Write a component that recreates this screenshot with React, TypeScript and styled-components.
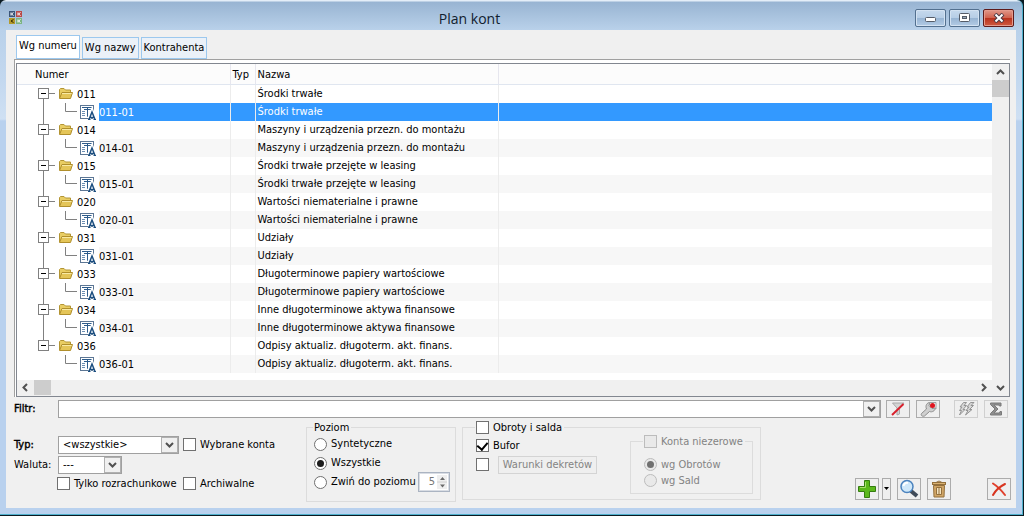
import React from "react";
import styled, { createGlobalStyle, css } from "styled-components";

const Global = createGlobalStyle`
  * { box-sizing: border-box; }
  body {
    margin: 0;
    background: #0a1a22;
    font: 11px/14px "DejaVu Sans Condensed", "Liberation Sans", sans-serif;
    color: #000;
  }
  button, input, select { font: inherit; color: inherit; margin: 0; padding: 0; border-radius: 0; }
`;

const Desktop = styled.div`
  min-height: 100vh;
  padding: 0 1px 1px 0;
  display: flex;
`;

const Frame = styled.main`
  flex: 1;
  min-width: 0;
  display: flex;
  flex-direction: column;
  padding: 0 6px 6px;
  border: solid #4fb0cc;
  border-width: 0 1px 1px 0;
  border-radius: 6px 6px 0 0;
  background: linear-gradient(#e4eef8 0 1px, #98b4d2 2px, #b9d1ea 30px, #c3d8ef 80px, #cfe0f3 119px, #b9d1ee 121px);
`;

const TitleBar = styled.header`
  height: 30px;
  padding: 0 2px 0 3px;
  display: grid;
  grid-template-columns: 1fr auto 1fr;
  align-items: center;
`;

const Title = styled.h1`
  margin: 7px 0 0;
  padding-right: 84px;
  font: 14px/20px "Open Sans", "Noto Sans", sans-serif;
  color: #10202e;
  grid-column: 2;
`;

const CaptionButtons = styled.div`
  display: flex;
  justify-content: flex-end;
  gap: 3px;
  padding-top: 6px;
`;

const CaptionButton = styled.button<{ $close?: boolean }>`
  width: 31px;
  height: 18px;
  display: grid;
  place-items: center;
  border: 1px solid ${(p) => (p.$close ? "#5e1a1a" : "#53708f")};
  border-radius: 2px;
  box-shadow: inset 0 0 0 1px ${(p) => (p.$close ? "#e59a8c" : "#d3e2f2")};
  background: ${(p) =>
    p.$close
      ? "linear-gradient(#e0988a, #d0604c 50%, #b8301c 50%, #cf5a40)"
      : "linear-gradient(#c6d9ed, #b6cde6 50%, #97b4d3 50%, #b3cbe5)"};
`;

const Client = styled.div`
  flex: 1;
  padding: 5px 5px 5px 8px;
  background: #f0f0f0;
`;

const Tabs = styled.nav`
  display: flex;
  align-items: flex-end;
  gap: 2px;
  padding-left: 2px;
`;

const Tab = styled.button<{ $active?: boolean }>`
  height: ${(p) => (p.$active ? 24 : 22)}px;
  padding: 0 2px ${(p) => (p.$active ? 3 : 0)}px;
  border: 1px solid #9cc8ee;
  background: ${(p) => (p.$active ? "#fff" : "#ebf1f8")};
`;

const Page = styled.section`
  margin-right: 1px;
  border: solid #a0a0a0;
  border-width: 1px 0 0 1px;
  background: #fff;
  padding: 3px 0 0 1px;
`;

const Viewport = styled.div`
  display: grid;
  grid-template-columns: minmax(0, 1fr) 17px;
  border: 1px solid #828790;
  background: #fff;
`;

const Accounts = styled.table`
  width: 100%;
  table-layout: fixed;
  border-collapse: collapse;
  margin-bottom: 7px;
`;

const HeadCell = styled.th<{ $indent?: number }>`
  height: 20px;
  padding: 2px 0 0 ${(p) => p.$indent ?? 2}px;
  border-right: 1px solid #e6e6ee;
  border-bottom: 1px solid #e0e6f0;
  background: #fcfcfc;
  font-weight: normal;
  text-align: left;
  &:last-child { border-right: 0; }
`;

const Row = styled.tr<{ $shaded?: boolean }>`
  height: 18px;
  background: ${(p) => (p.$shaded ? "#f7f7f7" : "#fff")};
`;

const Cell = styled.td<{ $selected?: boolean }>`
  padding: 1px 0 0 2px;
  border-right: 1px solid #ececec;
  white-space: nowrap;
  &:last-child { border-right: 0; }
  ${(p) => p.$selected && css`background: #3399ff; color: #fff;`}
`;

const TreeCell = styled(Cell)`
  padding: 0;
  background: #fff;
  color: #000;
`;

const TreeLine = styled.div<{ $leaf: boolean }>`
  display: grid;
  grid-template-columns: ${(p) => (p.$leaf ? "82px" : "60px")} 1fr;
  align-items: center;
`;

const Code = styled.span<{ $selected?: boolean; $shaded?: boolean }>`
  height: 18px;
  padding-top: 1px;
  line-height: 17px;
  ${(p) => p.$shaded && css`background: #f7f7f7;`}
  ${(p) => p.$selected && css`background: #3399ff; color: #fff;`}
`;

const ScrollTrack = styled.div<{ $vertical?: boolean }>`
  display: flex;
  flex-direction: ${(p) => (p.$vertical ? "column" : "row")};
  background: #f0f0f0;
  ${(p) => p.$vertical && css`grid-row: span 2;`}
`;

const ScrollButton = styled.button`
  width: 17px;
  height: 16px;
  display: grid;
  place-items: center;
  border: 0;
  background: transparent;
`;

const ScrollThumb = styled.div`
  width: 17px;
  height: 17px;
  background: #cdcdcd;
`;

const HorizontalThumb = styled(ScrollThumb)`
  height: 15px;
`;

const Spacer = styled.div`
  flex: 1;
`;

const FilterRow = styled.div`
  display: flex;
  align-items: center;
  margin-top: 3px;
  padding-right: 3px;
`;

const Caption = styled.label<{ $strong?: boolean }>`
  width: 44px;
  flex: none;
  white-space: nowrap;
  -webkit-text-stroke: ${(p) => (p.$strong ? "0.4px #000" : "0")};
`;

const Combo = styled.div<{ $width?: number }>`
  ${(p) => (p.$width ? css`width: ${p.$width}px;` : css`flex: 1;`)}
  height: 18px;
  display: grid;
  grid-template-columns: 1fr 17px;
  border: 1px solid #a0a0a0;
  background: #fff;
  & > * { grid-row: 1; }
`;

const ComboInput = styled.input`
  grid-column: 1;
  min-width: 0;
  border: 0;
  padding: 0 4px;
  outline: 0;
`;

const ComboSelect = styled.select`
  grid-column: 1 / 3;
  min-width: 0;
  appearance: none;
  border: 0;
  padding: 0 4px;
  background: transparent;
  outline: 0;
`;

const ComboArrow = styled.span`
  grid-column: 2;
  display: grid;
  place-items: center;
  border: 1px solid #b0b0b0;
  background: #f0f0f0;
  pointer-events: none;
`;

const ToolButton = styled.button<{ $tall?: boolean; $narrow?: boolean; $dim?: boolean }>`
  width: ${(p) => (p.$narrow ? 9 : 24)}px;
  height: ${(p) => (p.$tall ? 22 : 18)}px;
  flex: none;
  display: grid;
  place-items: center;
  border: 1px solid ${(p) => (p.$dim ? "#d0d0d0" : "#acacac")};
  background: #efefef;
`;

const ToolGroup = styled.div<{ $gap: number }>`
  display: flex;
  gap: ${(p) => p.$gap}px;
`;

const FilterTools = styled.div`
  display: flex;
  gap: 14px;
  margin-left: 5px;
`;

const Options = styled.form`
  display: flex;
  align-items: flex-start;
  margin-top: 3px;
`;

const Selectors = styled.div`
  width: 292px;
  padding-top: 14px;
`;

const Line = styled.div<{ $indent?: number; $short?: boolean }>`
  display: flex;
  align-items: center;
  height: ${(p) => (p.$short ? 18 : 20)}px;
  padding-left: ${(p) => p.$indent ?? 0}px;
`;

const Check = styled.label<{ $width?: number; $disabled?: boolean }>`
  display: flex;
  align-items: center;
  gap: 4px;
  height: 14px;
  white-space: nowrap;
  ${(p) => p.$width && css`width: ${p.$width}px;`}
  ${(p) => p.$disabled && css`color: #838383;`}
`;

const CheckInput = styled.input<{ $round?: boolean }>`
  appearance: none;
  flex: none;
  width: 13px;
  height: 13px;
  display: grid;
  place-items: center;
  border: 1px solid #707070;
  background: #fff;
  ${(p) => p.$round && css`border-radius: 50%;`}
  &:disabled { border-color: #bcbcbc; background: #e9e9e9; }
  &[type="radio"]:checked::after {
    content: "";
    width: 7px;
    height: 7px;
    border-radius: 50%;
    background: #1c1c1c;
  }
  &[type="radio"]:checked:disabled::after { background: #707070; }
  &[type="checkbox"]:checked::after {
    content: "";
    width: 5px;
    height: 8px;
    margin-bottom: 2px;
    border: solid #000;
    border-width: 0 2px 2px 0;
    transform: rotate(40deg);
  }
`;

const Group = styled.fieldset<{ $width: number; $height: number; $end?: number }>`
  min-width: 0;
  width: ${(p) => p.$width}px;
  height: ${(p) => p.$height}px;
  margin: 0 ${(p) => p.$end ?? 6}px 0 0;
  padding: 0 5px 0 7px;
  border: 1px solid #dcdcdc;
`;

const Legend = styled.legend<{ $flush?: boolean }>`
  padding: 0 2px 0 1px;
  margin-left: ${(p) => (p.$flush ? 5 : -1)}px;
`;

const Stack = styled.div<{ $gap: number; $top?: number }>`
  display: flex;
  flex-direction: column;
  gap: ${(p) => p.$gap}px;
  padding-top: ${(p) => p.$top ?? 0}px;
`;

const Split = styled.div`
  display: flex;
  justify-content: space-between;
  padding-left: 6px;
`;

const Between = styled.div`
  display: flex;
  justify-content: space-between;
  align-items: center;
  height: 19px;
`;

const Inline = styled.div`
  display: flex;
  align-items: center;
  gap: 9px;
`;

const ConditionButton = styled.button`
  width: 99px;
  height: 18px;
  border: 1px solid #d4d4d4;
  background: #efefef;
  color: #838383;
`;

const Spin = styled.div`
  width: 32px;
  height: 20px;
  display: grid;
  grid-template-columns: 1fr 12px;
  border: 1px solid #abb4c2;
  box-shadow: inset 0 0 0 1px #d9dde4;
  background: #fff;
`;

const SpinInput = styled.input`
  min-width: 0;
  border: 0;
  padding: 0 2px;
  background: transparent;
  color: #777;
  text-align: right;
`;

const Actions = styled.div`
  flex: 1;
  display: flex;
  justify-content: flex-end;
  gap: 36px;
  padding-top: 57px;
`;

type ChevronDir = "up" | "down" | "left" | "right";
const chevrons: Record<ChevronDir, string> = {
  up: "M1 6 4.500 2.500 8 6",
  down: "M1 3 4.500 6.500 8 3",
  left: "M6 1 2.500 4.500 6 8",
  right: "M3 1 6.500 4.500 3 8",
};
const Chevron = ({ dir }: { dir: ChevronDir }) => (
  <svg width="9" height="9" viewBox="0 0 9 9" fill="none" stroke="#505050" strokeWidth="2">
    <path d={chevrons[dir]} />
  </svg>
);

const AppIcon = () => (
  <svg width="13" height="17" viewBox="0 0 13 17">
    <rect x="0" y="4" width="6" height="6" fill="#3b5578" />
    <rect x="7" y="4" width="6" height="6" fill="#b84a48" />
    <rect x="0" y="11" width="6" height="6" fill="#b39a2c" />
    <rect x="7" y="11" width="6" height="6" fill="#7cb483" />
    <path d="M2 5.500v3M4.500 5.500 2.500 7l2 1.500M9 5.500v3M11.500 5.500 9.500 7l2 1.500M9 12.500v3M11.500 12.500 9.500 14l2 1.500" stroke="#fff" fill="none" />
    <path d="M4.500 12.500 2 14l2.500 1.500" stroke="#332b08" fill="none" />
  </svg>
);

const Folder = () => (
  <g transform="translate(42 2)">
    <path d="M.5 11V2.500L1.500 1.500H5L6.500 3H11.500V5" fill="#e9cd63" stroke="#b39534" />
    <path d="M.5 11.500 3 5.500H13.500L11.500 11.500Z" fill="#e4c558" stroke="#b08f2c" />
    <path d="M3 6.500H12.500" stroke="#f8e9a4" />
  </g>
);

const Sheet = () => (
  <g transform="translate(63 1)">
    <rect x=".5" y="1.500" width="13" height="13" fill="#fff" stroke="#5c7694" />
    <path d="M2 3.500H12M7.500 4V13M4 5.500H11" stroke="#2d5c8c" fill="none" />
    <path d="M2 7.500H5M2 9.500H5M2 11.500H5" stroke="#6d8fb3" fill="none" />
    <path d="M9 14.500 12 7.500 15 14.500" stroke="#fff" strokeWidth="4" fill="none" />
    <path d="M9 15.500 12 8 15 15.500M10 13.500H14" stroke="#1d4f80" strokeWidth="1.500" fill="none" />
    <path d="M8 15.500H10.500M13.500 15.500H16" stroke="#1d4f80" fill="none" />
  </g>
);

const ParentTree = ({ first, last }: { first: boolean; last: boolean }) => (
  <svg width="59" height="18" viewBox="0 0 59 18" display="block">
    <path d={`M26.500 ${first ? 9 : 0}V${last ? 9 : 18}M27 8.500H38`} stroke="#808080" fill="none" />
    <rect x="21.500" y="3.500" width="10" height="10" fill="#fff" stroke="#808080" />
    <path d="M24 8.500H29" stroke="#000" />
    <Folder />
  </svg>
);

const ChildTree = ({ last }: { last: boolean }) => (
  <svg width="82" height="18" viewBox="0 0 82 18" display="block">
    {!last && <path d="M26.500 0V18" stroke="#808080" />}
    <path d="M48.500 0V8.500H60" stroke="#808080" fill="none" />
    <Sheet />
  </svg>
);

const accounts: [string, string][] = [
  ["011", "Środki trwałe"],
  ["014", "Maszyny i urządzenia przezn. do montażu"],
  ["015", "Środki trwałe przejęte w leasing"],
  ["020", "Wartości niematerialne i prawne"],
  ["031", "Udziały"],
  ["033", "Długoterminowe papiery wartościowe"],
  ["034", "Inne długoterminowe aktywa finansowe"],
  ["036", "Odpisy aktualiz. długoterm. akt. finans."],
];

const AccountRows = () => (
  <tbody>
    {accounts.map(([code, name], i) => {
      const last = i === accounts.length - 1;
      const selected = i === 0;
      return (
        <React.Fragment key={code}>
          <Row>
            <TreeCell>
              <TreeLine $leaf={false}>
                <ParentTree first={i === 0} last={last} />
                <Code>{code}</Code>
              </TreeLine>
            </TreeCell>
            <Cell />
            <Cell>{name}</Cell>
            <Cell />
          </Row>
          <Row $shaded>
            <TreeCell>
              <TreeLine $leaf>
                <ChildTree last={last} />
                <Code $shaded $selected={selected}>{code}-01</Code>
              </TreeLine>
            </TreeCell>
            <Cell $selected={selected} />
            <Cell $selected={selected}>{name}</Cell>
            <Cell $selected={selected} />
          </Row>
        </React.Fragment>
      );
    })}
  </tbody>
);

const FunnelOff = () => (
  <svg width="16" height="16" viewBox="0 0 16 16">
    <path d="M2.500 2H14L9.500 7V13L7 14V7Z" fill="#d4d4d4" stroke="#a8a8a8" />
    <path d="M2 14 13.500 3" stroke="#d8202c" strokeWidth="2" />
  </svg>
);

const Wrench = () => (
  <svg width="17" height="16" viewBox="0 0 17 16">
    <path d="M1.500 12.500 6.500 8C5 4.500 7 1.500 10 1.500L9 4.500 12 7.500 15.500 7C15 10 12 11.500 9.500 10.500L4.500 15C2 16 .5 14 1.500 12.500Z" fill="#cfcfcf" stroke="#8d8d8d" />
    <path d="M9 1.500H16V8" stroke="#a0a0a0" fill="none" />
    <circle cx="12.500" cy="4.500" r="2.500" fill="#e0141e" />
  </svg>
);

const Bolts = () => (
  <svg width="17" height="16" viewBox="0 0 17 16" fill="#d8d8d8" stroke="#949494">
    <path d="M5.500 1.500H8.500L6 4.500H8.500L5 8.500H7L1.500 14 3.500 9.500H1.500L4 6H2Z" />
    <path d="M12.500 1.500H16L13 4.500H15.500L11.500 8.500H14L7.500 14 10 9.500H8L11 6H9Z" />
  </svg>
);

const Sum = () => (
  <svg width="14" height="14" viewBox="0 0 14 14">
    <path d="M1.500 1H12V4H10.500L10 3H5L9 7 5 11H10.500L11 9.500H12.500V13H1.500V11.500L6 7 1.500 2.500Z" fill="#8e8e8e" stroke="#7a7a7a" />
  </svg>
);

const Plus = () => (
  <svg width="20" height="20" viewBox="0 0 20 20">
    <path d="M7.500 1.500H12.500V7.500H18.500V12.500H12.500V18.500H7.500V12.500H1.500V7.500H7.500Z" fill="#5cb81c" stroke="#357c10" />
    <path d="M8.500 3V8.500H3" stroke="#a9e070" fill="none" />
  </svg>
);

const Magnifier = () => (
  <svg width="20" height="20" viewBox="0 0 20 20">
    <path d="M12 12 18 17" stroke="#3f4a58" strokeWidth="4" />
    <circle cx="8" cy="7.500" r="6" fill="#cfe8fa" stroke="#4b83be" strokeWidth="1.500" />
    <path d="M4.500 7C5 4.500 7 3.500 9 4" stroke="#fff" strokeWidth="2" fill="none" />
  </svg>
);

const Trash = () => (
  <svg width="16" height="18" viewBox="0 0 16 18" stroke="#94703c">
    <path d="M5 2.500 8 1 11 2.500" fill="none" />
    <rect x="1.500" y="2.500" width="13" height="2" fill="#d9b070" />
    <path d="M2.500 5.500H13.500L13 17H3Z" fill="#d0a566" />
    <path d="M5.500 7.500H10.500V14.500H5.500Z" fill="#f4e3c0" />
    <path d="M8 7.500V14.500" />
  </svg>
);

const Cross = () => (
  <svg width="16" height="16" viewBox="0 0 16 16" fill="none" strokeLinecap="round" strokeWidth="2">
    <path d="M2 2.500C6 5 10.500 9.500 14 14" stroke="#e0402c" />
    <path d="M14 3C9 5.500 4.500 9.500 2 14" stroke="#d8341f" />
  </svg>
);

const SpinArrows = () => (
  <svg width="12" height="18" viewBox="0 0 12 18">
    <rect x="0" y="2" width="10" height="14" fill="#efefef" />
    <path d="M0 9H10" stroke="#d0d0d0" />
    <path d="M3 7H8L5.500 4ZM3 11.500H8L5.500 14.500Z" fill="#6a6a6a" />
  </svg>
);

export default function App() {
  return (
    <Desktop>
      <Global />
      <Frame>
        <TitleBar>
          <AppIcon />
          <Title>Plan kont</Title>
          <CaptionButtons>
            <CaptionButton type="button" aria-label="Minimalizuj">
              <svg width="13" height="10" viewBox="0 0 13 10">
                <rect x="1.500" y="4.500" width="10" height="4" rx="1" fill="#fff" stroke="#555c68" />
              </svg>
            </CaptionButton>
            <CaptionButton type="button" aria-label="Maksymalizuj">
              <svg width="13" height="10" viewBox="0 0 13 10">
                <rect x="1.500" y=".5" width="10" height="8" rx="1" fill="#fff" stroke="#555c68" />
                <rect x="4.500" y="3.500" width="4" height="2" fill="#9ab" stroke="#555c68" />
              </svg>
            </CaptionButton>
            <CaptionButton type="button" $close aria-label="Zamknij">
              <svg width="12" height="10" viewBox="0 0 12 10">
                <path d="M2 1 10 9M10 1 2 9" stroke="#4d3a44" strokeWidth="4" />
                <path d="M2.500 1.500 9.500 8.500M9.500 1.500 2.500 8.500" stroke="#fff" strokeWidth="2" />
              </svg>
            </CaptionButton>
          </CaptionButtons>
        </TitleBar>

        <Client>
          <Tabs>
            <Tab type="button" $active>Wg numeru</Tab>
            <Tab type="button">Wg nazwy</Tab>
            <Tab type="button">Kontrahenta</Tab>
          </Tabs>

          <Page>
            <Viewport>
              <Accounts>
                <colgroup>
                  <col style={{ width: 213 }} />
                  <col style={{ width: 25 }} />
                  <col style={{ width: 243 }} />
                  <col />
                </colgroup>
                <thead>
                  <tr>
                    <HeadCell $indent={18}>Numer</HeadCell>
                    <HeadCell>Typ</HeadCell>
                    <HeadCell>Nazwa</HeadCell>
                    <HeadCell />
                  </tr>
                </thead>
                <AccountRows />
              </Accounts>
              <ScrollTrack $vertical>
                <ScrollButton type="button" aria-label="W górę"><Chevron dir="up" /></ScrollButton>
                <ScrollThumb />
                <Spacer />
                <ScrollButton type="button" aria-label="W dół"><Chevron dir="down" /></ScrollButton>
              </ScrollTrack>
              <ScrollTrack>
                <ScrollButton type="button" aria-label="W lewo"><Chevron dir="left" /></ScrollButton>
                <HorizontalThumb />
                <Spacer />
                <ScrollButton type="button" aria-label="W prawo"><Chevron dir="right" /></ScrollButton>
              </ScrollTrack>
            </Viewport>
          </Page>

          <FilterRow>
            <Caption htmlFor="filter" $strong>Filtr:</Caption>
            <Combo>
              <ComboInput id="filter" type="text" />
              <ComboArrow><Chevron dir="down" /></ComboArrow>
            </Combo>
            <FilterTools>
              <ToolGroup $gap={6}>
                <ToolButton type="button" aria-label="Usuń filtr"><FunnelOff /></ToolButton>
                <ToolButton type="button" aria-label="Ustawienia filtra"><Wrench /></ToolButton>
              </ToolGroup>
              <ToolGroup $gap={6}>
                <ToolButton type="button" $dim disabled aria-label="Przelicz"><Bolts /></ToolButton>
                <ToolButton type="button" $dim disabled aria-label="Suma"><Sum /></ToolButton>
              </ToolGroup>
            </FilterTools>
          </FilterRow>

          <Options>
            <Selectors>
              <Line>
                <Caption htmlFor="kind" $strong>Typ:</Caption>
                <Combo $width={121}>
                  <ComboSelect id="kind"><option>&lt;wszystkie&gt;</option></ComboSelect>
                  <ComboArrow><Chevron dir="down" /></ComboArrow>
                </Combo>
                <Line $indent={4}>
                  <Check><CheckInput type="checkbox" />Wybrane konta</Check>
                </Line>
              </Line>
              <Line>
                <Caption htmlFor="currency">Waluta:</Caption>
                <Combo $width={64}>
                  <ComboSelect id="currency"><option>---</option></ComboSelect>
                  <ComboArrow><Chevron dir="down" /></ComboArrow>
                </Combo>
              </Line>
              <Line $indent={43} $short>
                <Check $width={126}><CheckInput type="checkbox" />Tylko rozrachunkowe</Check>
                <Check><CheckInput type="checkbox" />Archiwalne</Check>
              </Line>
            </Selectors>

            <Group $width={150} $height={81}>
              <Legend>Poziom</Legend>
              <Stack $gap={0}>
                <Between>
                  <Check><CheckInput $round type="radio" name="level" />Syntetyczne</Check>
                </Between>
                <Between>
                  <Check><CheckInput $round type="radio" name="level" defaultChecked />Wszystkie</Check>
                </Between>
                <Between>
                  <Check><CheckInput $round type="radio" name="level" />Zwiń do poziomu</Check>
                  <Spin>
                    <SpinInput type="text" defaultValue="5" disabled aria-label="Poziom zwinięcia" />
                    <SpinArrows />
                  </Spin>
                </Between>
              </Stack>
            </Group>

            <Group $width={299} $height={79}>
              <Legend $flush>
                <Check><CheckInput type="checkbox" />Obroty i salda</Check>
              </Legend>
              <Split>
                <Stack $gap={3} $top={4}>
                  <Check><CheckInput type="checkbox" defaultChecked />Bufor</Check>
                  <Inline>
                    <CheckInput type="checkbox" aria-label="Warunki dekretów" />
                    <ConditionButton type="button" disabled>Warunki dekretów</ConditionButton>
                  </Inline>
                </Stack>
                <Group $width={123} $height={59} $end={2}>
                  <Legend $flush>
                    <Check $disabled><CheckInput type="checkbox" disabled />Konta niezerowe</Check>
                  </Legend>
                  <Split>
                    <Stack $gap={2} $top={9}>
                      <Check $disabled><CheckInput $round type="radio" name="scope" disabled defaultChecked />wg Obrotów</Check>
                      <Check $disabled><CheckInput $round type="radio" name="scope" disabled />wg Sald</Check>
                    </Stack>
                  </Split>
                </Group>
              </Split>
            </Group>

            <Actions>
              <ToolGroup $gap={6}>
                <ToolGroup $gap={3}>
                  <ToolButton type="button" $tall aria-label="Dodaj"><Plus /></ToolButton>
                  <ToolButton type="button" $tall $narrow aria-label="Więcej">
                    <svg width="5" height="3" viewBox="0 0 5 3"><path d="M0 0H5L2.500 3Z" /></svg>
                  </ToolButton>
                </ToolGroup>
                <ToolButton type="button" $tall aria-label="Podgląd"><Magnifier /></ToolButton>
                <ToolButton type="button" $tall aria-label="Usuń"><Trash /></ToolButton>
              </ToolGroup>
              <ToolButton type="button" $tall aria-label="Anuluj"><Cross /></ToolButton>
            </Actions>
          </Options>
        </Client>
      </Frame>
    </Desktop>
  );
}
